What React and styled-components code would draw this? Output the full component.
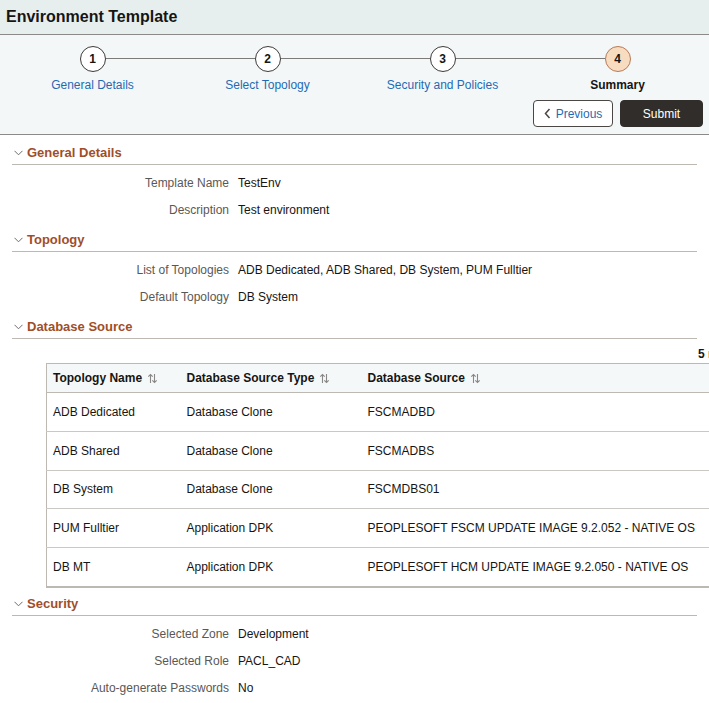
import React from "react";
import styled, { createGlobalStyle } from "styled-components";

const GlobalStyle = createGlobalStyle`
  html, body {
    margin: 0;
    padding: 0;
    overflow: hidden;
    background: #ffffff;
  }
  body {
    font-family: "Liberation Sans", Arial, sans-serif;
    color: #161513;
  }
`;

const Page = styled.div`
  width: 709px;
  overflow: hidden;
`;

const TitleBar = styled.header`
  height: 34px;
  display: flex;
  align-items: center;
  padding-left: 6px;
  background: #e7efee;
  border-bottom: 1px solid #8c8a88;
`;

const Title = styled.h1`
  margin: 0;
  font-size: 16px;
  font-weight: bold;
  color: #161513;
`;

const TrainArea = styled.div`
  background: #f4f7f8;
  border-bottom: 1px solid #8c8a88;
  padding: 11px 6px 7px 5px;
`;

const Steps = styled.div`
  display: grid;
  grid-template-columns: repeat(4, 175px);
`;

const Step = styled.div`
  display: flex;
  flex-direction: column;
  align-items: center;
`;

const CircleRow = styled.div`
  display: flex;
  align-items: center;
  width: 100%;
`;

const Connector = styled.div`
  flex: 1;
  height: 1px;
  background: ${(p) => (p.$off ? "transparent" : "#7d7b79")};
  margin-top: -2px;
`;

const Circle = styled.div`
  width: 24px;
  height: 24px;
  border-radius: 50%;
  border: 1.5px solid ${(p) => (p.$active ? "#b77a59" : "#3d3b39")};
  background: ${(p) => (p.$active ? "#f8dcc0" : "#ffffff")};
  display: flex;
  align-items: center;
  justify-content: center;
  font-size: 12px;
  font-weight: bold;
  color: #161513;
`;

const StepLabel = styled.div`
  margin-top: 6px;
  font-size: 12px;
  line-height: 14px;
  color: ${(p) => (p.$active ? "#161513" : "#1f6bb3")};
  font-weight: ${(p) => (p.$active ? "bold" : "normal")};
`;

const Actions = styled.div`
  display: flex;
  justify-content: flex-end;
  gap: 7px;
  margin-top: 8px;
`;

const Button = styled.button`
  height: 27px;
  border-radius: 4px;
  font-family: "Liberation Sans", Arial, sans-serif;
  font-size: 12px;
  display: flex;
  align-items: center;
  justify-content: center;
  gap: 5px;
  cursor: pointer;
  padding: 0;
  border: 1px solid ${(p) => (p.$primary ? "#312d2a" : "#4a4744")};
  background: ${(p) => (p.$primary ? "#312d2a" : "#ffffff")};
  color: ${(p) => (p.$primary ? "#ffffff" : "#1f6bb3")};
  width: ${(p) => p.$w}px;
`;

const Content = styled.main`
  padding: 0 12px;
`;

const Section = styled.section`
  margin-top: ${(p) => (p.$first ? 10 : 8)}px;
`;

const SectionHeader = styled.h2`
  margin: 0;
  display: flex;
  align-items: center;
  gap: 4px;
  padding: 0 0 3px 2px;
  line-height: 16px;
  font-size: 13px;
  font-weight: bold;
  color: #9f4e2a;
  border-bottom: 1px solid #bdb8b2;
`;

const Fields = styled.div`
  display: grid;
  grid-template-columns: 217px 1fr;
  column-gap: 9px;
  padding-top: 5px;
`;

const FieldLabel = styled.div`
  text-align: right;
  font-size: 12px;
  line-height: 27px;
  color: #5a5856;
`;

const FieldValue = styled.div`
  font-size: 12px;
  line-height: 27px;
  color: #161513;
  white-space: nowrap;
`;

const TableBlock = styled.div`
  margin-left: 34px;
  width: 690px;
`;

const RowCount = styled.div`
  text-align: right;
  font-size: 12px;
  font-weight: bold;
  line-height: 14px;
  margin: 8px 0 2px;
  white-space: nowrap;
`;

const Table = styled.table`
  width: 100%;
  border-collapse: collapse;
  border-left: 1px solid #bdb8b2;
  border-top: 1px solid #bdb8b2;
  border-bottom: 2px solid #bdb8b2;
  font-size: 12px;
`;

const Th = styled.th`
  text-align: left;
  font-weight: bold;
  height: 29px;
  padding: 0 6px;
  background: #f5f8f9;
  border-bottom: 1px solid #bdb8b2;
  white-space: nowrap;
  width: ${(p) => (p.$w ? `${p.$w}px` : "auto")};
  box-sizing: border-box;
`;

const Td = styled.td`
  height: 37.8px;
  padding: 0 6px;
  border-bottom: 1px solid #cbc7c2;
  white-space: nowrap;
  color: #161513;
`;

const HeadInner = styled.span`
  display: inline-flex;
  align-items: center;
  gap: 5px;
`;

const Chevron = () => (
  <svg width="9" height="6" viewBox="0 0 9 6" fill="none">
    <path d="M0.5 0.8 L4.5 4.8 L8.5 0.8" stroke="#6f6d6b" strokeWidth="1" />
  </svg>
);

const SortIcon = () => (
  <svg width="11" height="11" viewBox="0 0 11 11" fill="none" stroke="#8a8886" strokeWidth="1.1">
    <path d="M3.5 10 V1.5 M1.3 3.7 L3.5 1.5 L5.7 3.7" />
    <path d="M7.5 1 V9.5 M5.3 7.3 L7.5 9.5 L9.7 7.3" />
  </svg>
);

const PrevIcon = () => (
  <svg width="7" height="11" viewBox="0 0 7 11" fill="none">
    <path d="M5.5 1 L1.5 5.5 L5.5 10" stroke="#4a4744" strokeWidth="1.5" />
  </svg>
);

const steps = ["General Details", "Select Topology", "Security and Policies", "Summary"];

const rows = [
  ["ADB Dedicated", "Database Clone", "FSCMADBD"],
  ["ADB Shared", "Database Clone", "FSCMADBS"],
  ["DB System", "Database Clone", "FSCMDBS01"],
  ["PUM Fulltier", "Application DPK", "PEOPLESOFT FSCM UPDATE IMAGE 9.2.052 - NATIVE OS"],
  ["DB MT", "Application DPK", "PEOPLESOFT HCM UPDATE IMAGE 9.2.050 - NATIVE OS"],
];

const FieldList = ({ items }) => (
  <Fields>
    {items.map(([label, value]) => (
      <React.Fragment key={label}>
        <FieldLabel>{label}</FieldLabel>
        <FieldValue>{value}</FieldValue>
      </React.Fragment>
    ))}
  </Fields>
);

const App = () => {
  return (
    <Page>
      <GlobalStyle />
      <TitleBar>
        <Title>Environment Template</Title>
      </TitleBar>
      <TrainArea>
        <Steps>
          {steps.map((s, i) => (
            <Step key={s}>
              <CircleRow>
                <Connector $off={i === 0} />
                <Circle $active={i === 3}>{i + 1}</Circle>
                <Connector $off={i === steps.length - 1} />
              </CircleRow>
              <StepLabel $active={i === 3}>{s}</StepLabel>
            </Step>
          ))}
        </Steps>
        <Actions>
          <Button $w={80}>
            <PrevIcon />
            Previous
          </Button>
          <Button $primary $w={83}>Submit</Button>
        </Actions>
      </TrainArea>
      <Content>
        <Section $first>
          <SectionHeader>
            <Chevron />
            General Details
          </SectionHeader>
          <FieldList
            items={[
              ["Template Name", "TestEnv"],
              ["Description", "Test environment"],
            ]}
          />
        </Section>
        <Section>
          <SectionHeader>
            <Chevron />
            Topology
          </SectionHeader>
          <FieldList
            items={[
              ["List of Topologies", "ADB Dedicated, ADB Shared, DB System, PUM Fulltier"],
              ["Default Topology", "DB System"],
            ]}
          />
        </Section>
        <Section>
          <SectionHeader>
            <Chevron />
            Database Source
          </SectionHeader>
          <TableBlock>
            <RowCount>5 rows</RowCount>
            <Table>
              <thead>
                <tr>
                  <Th $w={134}>
                    <HeadInner>Topology Name <SortIcon /></HeadInner>
                  </Th>
                  <Th $w={181}>
                    <HeadInner>Database Source Type <SortIcon /></HeadInner>
                  </Th>
                  <Th>
                    <HeadInner>Database Source <SortIcon /></HeadInner>
                  </Th>
                </tr>
              </thead>
              <tbody>
                {rows.map((r) => (
                  <tr key={r[0]}>
                    {r.map((c, j) => (
                      <Td key={j}>{c}</Td>
                    ))}
                  </tr>
                ))}
              </tbody>
            </Table>
          </TableBlock>
        </Section>
        <Section>
          <SectionHeader>
            <Chevron />
            Security
          </SectionHeader>
          <FieldList
            items={[
              ["Selected Zone", "Development"],
              ["Selected Role", "PACL_CAD"],
              ["Auto-generate Passwords", "No"],
            ]}
          />
        </Section>
      </Content>
    </Page>
  );
};

export default App;
